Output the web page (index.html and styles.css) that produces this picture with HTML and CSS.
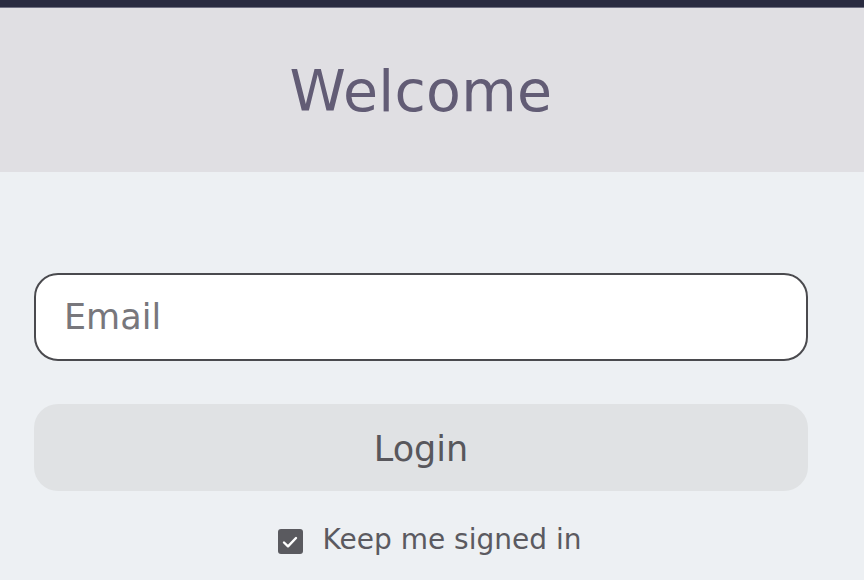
FILE: index.html
```html
<!DOCTYPE html>
<html>
<head>
<meta charset="utf-8">
<link rel="stylesheet" href="styles.css">
</head>
<body>
<div class="topbar"></div>
<header class="hero">
  <h1 class="title">Welcome</h1>
</header>
<main class="form">
  <div class="field"><input class="email" type="text" placeholder="Email"></div>
  <button class="login">Login</button>
  <label class="keep">
    <span class="box"><svg width="20" height="20" viewBox="0 0 20 20"><path d="M4 10.5l4 3.8L16 6" fill="none" stroke="#fff" stroke-width="2.4" stroke-linecap="round" stroke-linejoin="round"/></svg></span>
    <span class="keep-text">Keep me signed in</span>
  </label>
</main>
</body>
</html>
```
FILE: styles.css
```css
* { box-sizing: border-box; }
html, body { margin: 0; padding: 0; }
body {
  background: #edf0f3;
  font-family: "DejaVu Sans", sans-serif;
  width: 864px;
  height: 580px;
  overflow: hidden;
}
.topbar {
  height: 8px;
  background: #292b40;
  border-bottom: 1px solid #6f7082;
}
.hero {
  background: #e0dfe3;
  height: 164px;
  width: 864px;
  padding-top: 55px;
}
.title {
  margin: 0;
  width: 842px;
  text-align: center;
  font-size: 57px;
  line-height: 56px;
  font-weight: normal;
  color: #625c75;
  letter-spacing: 0.3px;
}
.form {
  width: 842px;
  padding: 101px 34px 0 34px;
  display: flex;
  flex-direction: column;
}
.email {
  width: 774px;
  height: 88px;
  border: 2px solid #4a4a4e;
  border-radius: 24px;
  background: #fff;
  padding: 0 0 0 28px;
  font-family: "DejaVu Sans", sans-serif;
  font-size: 35px;
  color: #333;
  outline: none;
}
.email::placeholder { color: #78777c; }
.login {
  margin-top: 43px;
  width: 774px;
  height: 87px;
  border: none;
  border-radius: 24px;
  background: #e0e2e4;
  font-family: "DejaVu Sans", sans-serif;
  font-size: 35px;
  color: #58575c;
  padding: 0;
  padding-top: 2px;
}
.keep {
  margin-top: 32px;
  padding-left: 17px;
  display: flex;
  align-items: center;
  justify-content: center;
  gap: 20px;
}
.box {
  width: 25px;
  height: 25px;
  border-radius: 3px;
  background: #5a5a5f;
  display: flex;
  align-items: center;
  justify-content: center;
  margin-top: 4px;
}
.keep-text {
  font-size: 28px;
  color: #5b5a60;
}
```
